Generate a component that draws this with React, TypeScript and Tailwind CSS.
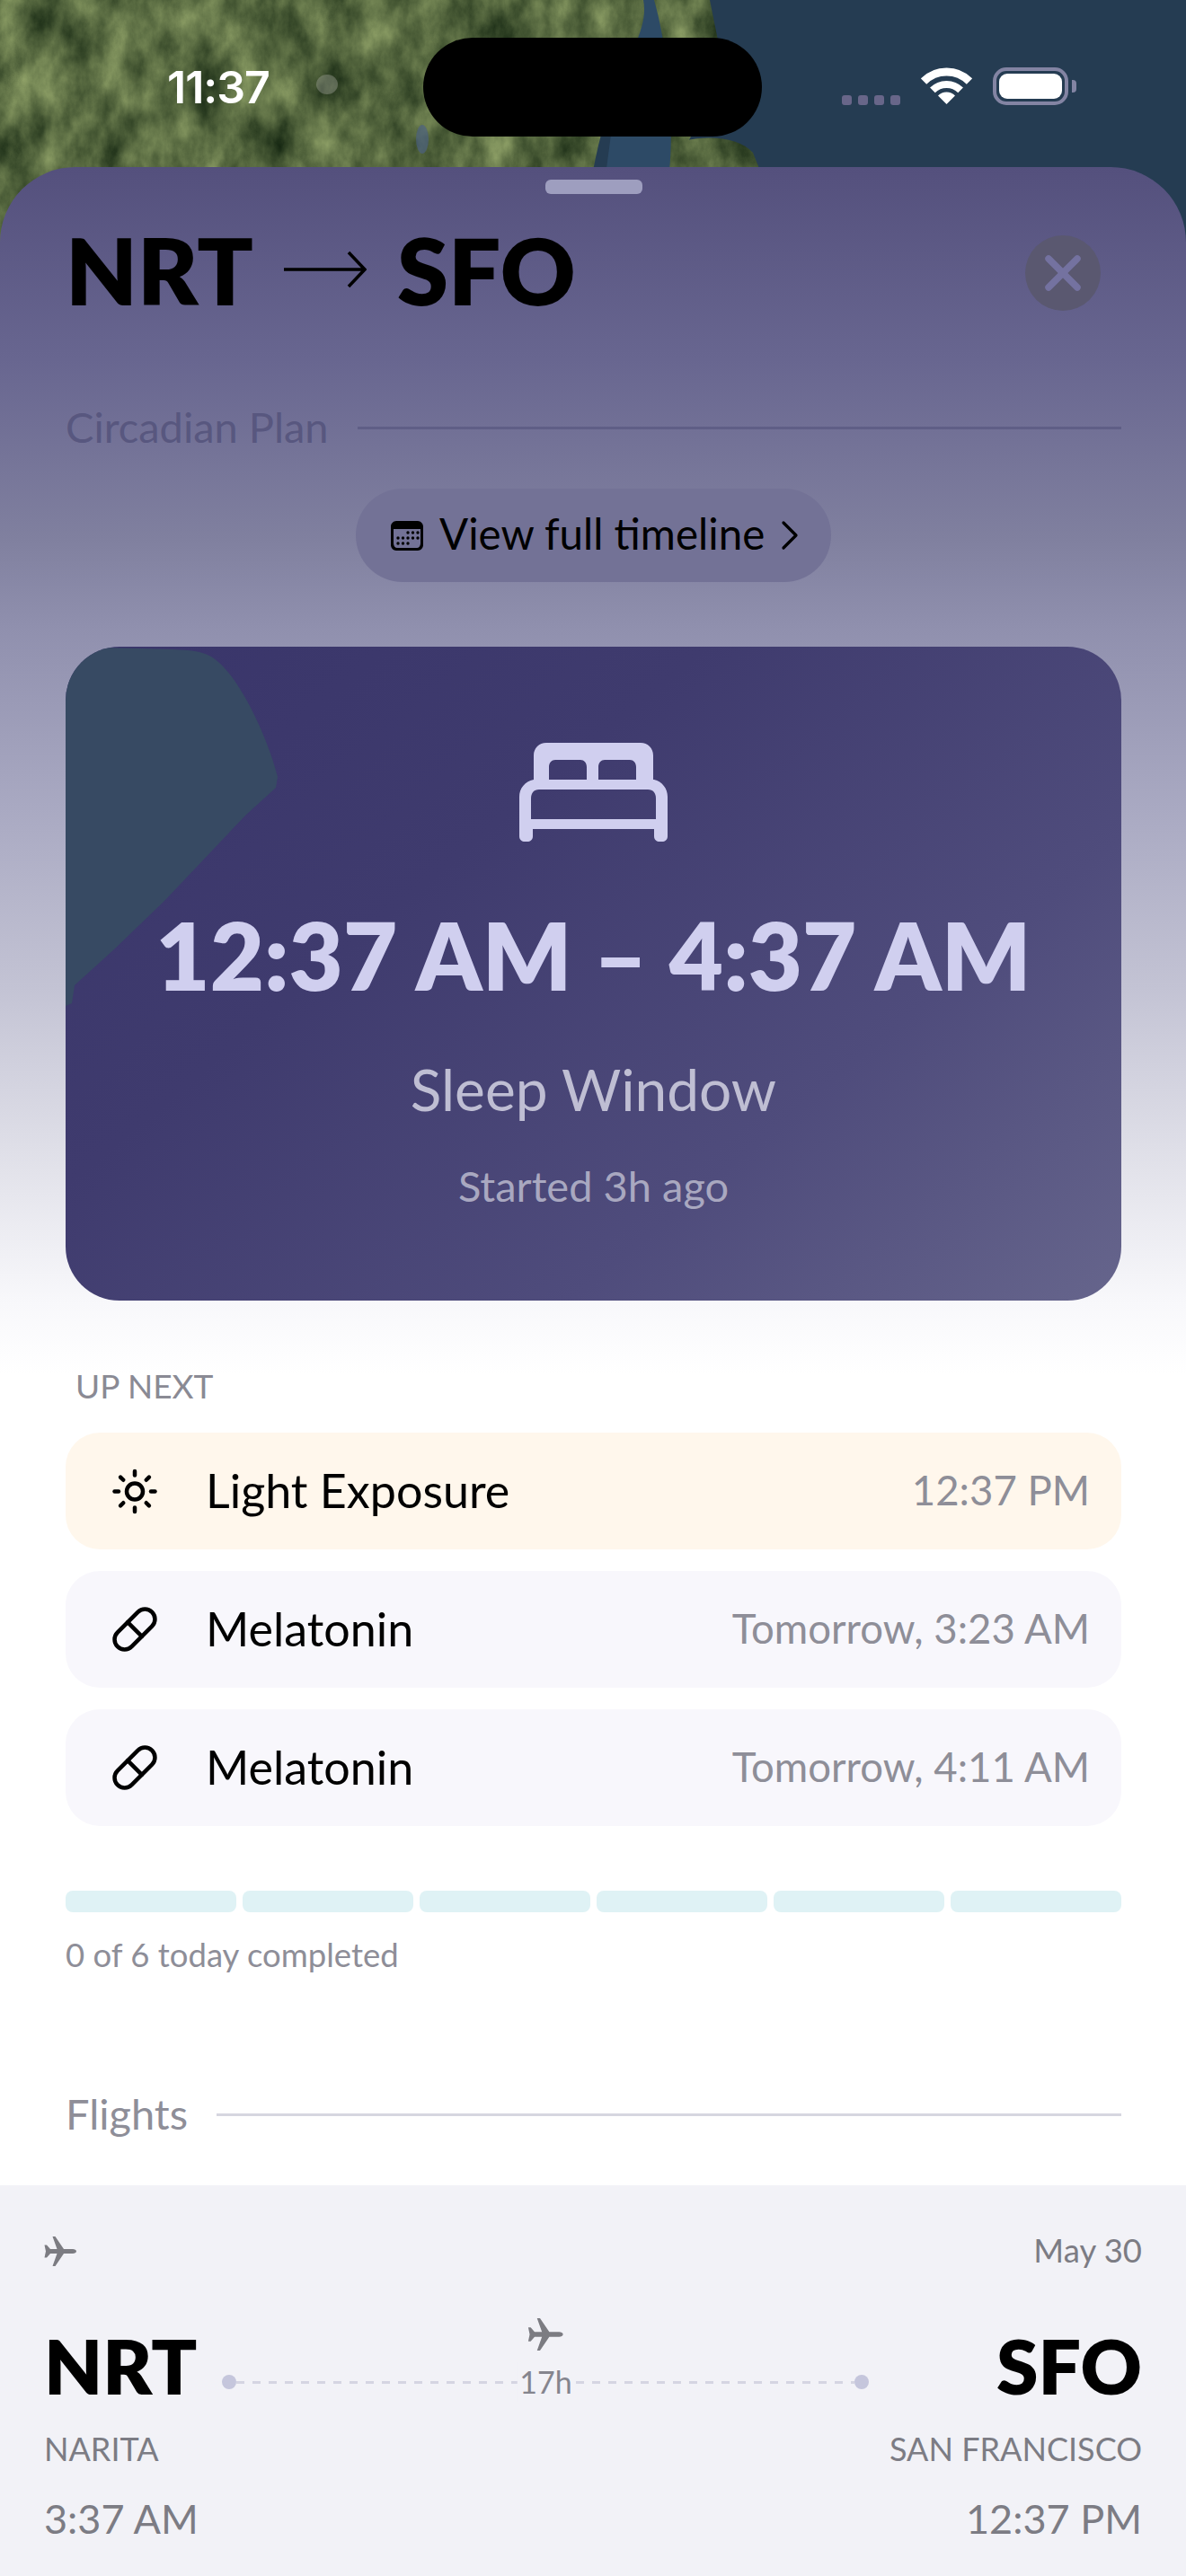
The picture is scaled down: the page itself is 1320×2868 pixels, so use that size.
import { ChevronRight, Pill, Sun, X } from "lucide-react"

function MapBackdrop() {
  return (
    <svg className="absolute left-0 top-0 h-[300px] w-[1320px]" viewBox="0 0 1320 300">
      <defs>
        <filter id="land" x="0" y="0" width="100%" height="100%" colorInterpolationFilters="sRGB">
          <feTurbulence type="fractalNoise" baseFrequency="0.028 0.016" numOctaves="6" seed="11" result="n" />
          <feColorMatrix in="n" type="matrix" values="0.6 0 0 0 0.04  0.6 0 0 0 0.11  0.42 0 0 0 0.04  0 0 0 0 1" result="c" />
          <feComposite in="c" in2="SourceAlpha" operator="in" />
        </filter>
      </defs>
      <rect width="1320" height="300" fill="#253c52" />
      <path d="M660 300 L680 150 L700 60 L716 0 L760 0 L760 190 L745 300 Z" fill="#2d4a66" />
      <path d="M0 0 H716 C722 30 700 60 690 90 C676 120 668 150 660 190 L650 300 H0 Z" fill="#000" filter="url(#land)" />
      <path d="M728 0 H790 C796 30 800 50 806 75 C800 100 790 120 770 150 C760 170 750 180 745 190 C750 140 745 60 728 0 Z" fill="#000" filter="url(#land)" />
      <path d="M748 160 C780 150 820 150 838 170 L850 200 H745 Z" fill="#000" filter="url(#land)" />
      <ellipse cx="364" cy="94" rx="12" ry="11" fill="#b5b5b0" opacity="0.35" />
      <ellipse cx="470" cy="155" rx="7" ry="16" fill="#4a5f8a" opacity="0.6" />
    </svg>
  )
}

function StatusBar() {
  return (
    <div className="relative flex h-[186px] items-start">
      <div className="ml-[186px] mt-[67px] w-[130px] text-[50px] leading-[60px] font-semibold tracking-[-1px] text-white font-['Inter',sans-serif]">11:37</div>
      <div className="ml-[155px] mt-[42px] h-[110px] w-[377px] rounded-full bg-black" />
      <div className="ml-[89px] mt-[75px] flex h-[42px] items-end">
        <div className="flex gap-[7px]">
          <div className="h-[11px] w-[11px] rounded-[3px] bg-[#686689]" />
          <div className="h-[11px] w-[11px] rounded-[3px] bg-[#686689]" />
          <div className="h-[11px] w-[11px] rounded-[3px] bg-[#686689]" />
          <div className="h-[11px] w-[11px] rounded-[3px] bg-[#686689]" />
        </div>
        <svg className="ml-[23px]" width="57" height="42" viewBox="0 0 57 42" fill="none">
          <path d="M3 15.5 A36 36 0 0 1 54 15.5" stroke="#fff" strokeWidth="9" />
          <path d="M12.9 25.4 A22 22 0 0 1 44.1 25.4" stroke="#fff" strokeWidth="8" />
          <path d="M28.5 41 L19 31.5 A13.4 13.4 0 0 1 38 31.5 Z" fill="#fff" />
        </svg>
        <div className="ml-[23px] flex h-[42px] w-[84px] items-center justify-center rounded-[15px] border-[4px] border-[#8384a3]">
          <div className="h-[28px] w-[70px] rounded-[9px] bg-white" />
        </div>
        <div className="mb-[14px] ml-[4px] h-[14px] w-[5px] rounded-r-[4px] bg-[#8384a3]" />
      </div>
    </div>
  )
}

function SectionTitle({ label, color, line }: { label: string; color: string; line: string }) {
  return (
    <div className="flex h-[60px] items-center gap-[32px]">
      <span className={`-mt-[3px] text-[47px] leading-[60px] ${color}`}>{label}</span>
      <div className={`h-[3px] flex-1 ${line}`} />
    </div>
  )
}

function NextRow({ icon, label, time, tint }: { icon: React.ReactNode; label: string; time: string; tint: string }) {
  return (
    <div className={`flex h-[130px] items-center rounded-[38px] pl-[50px] pr-[35px] ${tint}`}>
      <div className="flex w-[54px] justify-center">{icon}</div>
      <span className="-mt-[2px] ml-[52px] text-[52px] leading-[70px] text-black">{label}</span>
      <span className="-mt-[2px] ml-auto text-[45.5px] leading-[60px] text-[#8e8e98]">{time}</span>
    </div>
  )
}

function Plane({ width, height }: { width: number; height: number }) {
  return (
    <svg width={width} height={height} viewBox="0 0 36 33" fill="#7c7c82">
      <path d="M36 16.5 C36 18 34 19 32 19 L22 19 L12.5 33 L9.5 33 L14.5 19 L7 19 L3 23.5 L0.5 23.5 L2 16.5 L0.5 9.5 L3 9.5 L7 14 L14.5 14 L9.5 0 L12.5 0 L22 14 L32 14 C34 14 36 15 36 16.5 Z" />
    </svg>
  )
}

function FlightCard() {
  return (
    <div className="-ml-[73px] -mr-[72px] mt-[49px] h-[435px] bg-[#f2f2f7] pl-[49px] pr-[49px] pt-[57px]">
      <div className="flex h-[33px] items-center justify-between">
        <Plane width={36} height={33} />
        <span className="-mt-[4px] text-[36.5px] leading-[50px] text-[#7c7c84]">May 30</span>
      </div>
      <div className="mt-[47px] flex h-[120px] items-start justify-between">
        <div className="flex">
          <span className="text-[84px] leading-[128px] font-extrabold text-black">NRT</span>
          <div className="relative ml-[28px] flex w-[720px] flex-col items-center">
            <div className="mt-[11px]">
              <Plane width={40} height={36} />
            </div>
            <div className="mt-[27px] flex h-[16px] w-full items-center">
              <div className="h-[16px] w-[16px] rounded-full bg-[#c5c6dc]" />
              <div className="h-[3px] flex-1 bg-[repeating-linear-gradient(90deg,#d5d5e2_0_9px,transparent_9px_18px)]" />
              <div className="h-[16px] w-[16px] rounded-full bg-[#c5c6dc]" />
            </div>
            <span className="absolute left-1/2 top-[60px] -translate-x-1/2 bg-[#f2f2f7] px-[2px] text-[34px] leading-[44px] text-[#85858e]">17h</span>
          </div>
        </div>
        <span className="text-[84px] leading-[128px] font-extrabold text-black">SFO</span>
      </div>
      <div className="mt-[11px] flex h-[50px] items-center justify-between text-[36px] text-[#7c7c84]">
        <span>NARITA</span>
        <span>SAN FRANCISCO</span>
      </div>
      <div className="mt-[24px] flex h-[60px] items-center justify-between text-[45px] text-[#7c7c84]">
        <span>3:37 AM</span>
        <span>12:37 PM</span>
      </div>
    </div>
  )
}

export default function App() {
  return (
    <div className="relative h-[2868px] w-[1320px] overflow-hidden bg-[#253c52] font-['Lato',sans-serif]">
      <MapBackdrop />
      <StatusBar />

      <div className="relative rounded-t-[84px] bg-[linear-gradient(180deg,#54507d_0px,#686690_214px,#80809f_414px,#9090ae_514px,#a9a9c2_714px,#c3c3d4_914px,#e2e2ea_1114px,#f8f8fb_1264px,#ffffff_1344px)] pl-[73px] pr-[72px]">
        <div className="flex justify-center pt-[14px]">
          <div className="h-[16px] w-[108px] rounded-[6px] bg-[#9e9ebf]" />
        </div>

        {/* Header */}
        <div className="mt-[46px] flex h-[84px] items-center justify-between">
          <div className="-mt-[8px] flex items-center">
            <span className="text-[103px] leading-[100px] font-extrabold text-black">NRT</span>
            <svg className="ml-[34px] mr-[34px]" width="92" height="46" viewBox="0 0 92 46" fill="none" stroke="#000" strokeWidth="3.5">
              <path d="M0 23 H90 M72 4 L90 23 L72 42" />
            </svg>
            <span className="text-[103px] leading-[100px] font-extrabold text-black">SFO</span>
          </div>
          <div className="mr-[23px] flex h-[84px] w-[84px] items-center justify-center rounded-full bg-[#5a5870]">
            <X size={64} strokeWidth={2.8} className="text-[#7472a0]" />
          </div>
        </div>

        <div className="mt-[100px]">
          <SectionTitle label="Circadian Plan" color="text-[#58577f]" line="bg-[#5f5e86]" />
        </div>

        <div className="mt-[38px] flex justify-center">
          <div className="flex h-[104px] w-[529px] items-center rounded-full bg-[#737296] pl-[39px]">
            <svg width="36" height="33" viewBox="0 0 36 33" fill="#000">
              <path fillRule="evenodd" d="M6 0 H30 C33 0 36 3 36 6 V27 C36 30 33 33 30 33 H6 C3 33 0 30 0 27 V6 C0 3 3 0 6 0 Z M3 9 V25 C3 28 5 30 7 30 H29 C31 30 33 28 33 25 V9 Z" />
              <circle cx="19" cy="13" r="1.7" />
              <circle cx="24.5" cy="13" r="1.7" />
              <circle cx="30" cy="13" r="1.7" />
              <circle cx="8" cy="19" r="1.7" />
              <circle cx="13.5" cy="19" r="1.7" />
              <circle cx="19" cy="19" r="1.7" />
              <circle cx="24.5" cy="19" r="1.7" />
              <circle cx="30" cy="19" r="1.7" />
              <circle cx="8" cy="25" r="1.7" />
              <circle cx="13.5" cy="25" r="1.7" />
              <circle cx="19" cy="25" r="1.7" />
            </svg>
            <span className="-mt-[4px] ml-[18px] text-[47.5px] leading-[60px] text-black">View full timeline</span>
            <ChevronRight size={56} strokeWidth={1.4} className="text-black" />
          </div>
        </div>

        {/* Sleep window card */}
        <div className="relative mt-[72px] flex h-[728px] flex-col items-center overflow-hidden rounded-[60px] bg-[linear-gradient(140deg,#39356a_0%,#3f3b6e_35%,#4f4c7c_70%,#66658c_100%)]">
          <svg className="absolute left-0 top-0" width="240" height="400" viewBox="0 0 240 400">
            <path d="M0 400 L0 0 L120 3 C140 4 150 5 160 10 C190 25 225 100 236 145 L234 157 L200 188 L110 283 L54 337 L10 377 L7 397 Z" fill="#374a63" />
          </svg>
          <svg className="relative mt-[107px]" width="165" height="110" viewBox="0 0 165 110" fill="#d0cfef">
            <path fillRule="evenodd" d="M30 0 H135 C143 0 149 6 149 14 V41 H150 C159 43 165 51 165 60 V104 C165 108 162 110 159 110 H156 C153 110 150 108 150 104 V96 H15 V104 C15 108 12 110 9 110 H6 C3 110 0 108 0 104 V60 C0 51 6 43 16 41 V14 C16 6 22 0 30 0 Z M33 41 H75 V27 C75 22 72 19 68 19 H40 C36 19 33 22 33 27 Z M88 41 H130 V27 C130 22 127 19 123 19 H95 C91 19 88 22 88 27 Z M22 52 C16 52 13 56 13 62 V85 H152 V62 C152 56 149 52 143 52 Z" />
          </svg>
          <div className="relative mt-[66px] text-[104px] leading-[120px] font-extrabold text-[#d0cfef]">12:37 AM – 4:37 AM</div>
          <div className="mt-[50px] text-[64px] leading-[80px] text-[#bfbed3]">Sleep Window</div>
          <div className="mt-[37px] text-[47px] leading-[60px] text-[#a9a8c0]">Started 3h ago</div>
        </div>

        <div className="mt-[70px] h-[52px] pl-[11px] text-[37px] leading-[50px] text-[#8a8a94]">UP NEXT</div>

        <div className="mt-[25px] flex flex-col gap-[24px]">
          <NextRow icon={<Sun size={65} strokeWidth={2} className="text-black" />} label="Light Exposure" time="12:37 PM" tint="bg-[#fff7ec]" />
          <NextRow icon={<Pill size={60} strokeWidth={2} className="text-black" />} label="Melatonin" time="Tomorrow, 3:23 AM" tint="bg-[#f8f7fc]" />
          <NextRow icon={<Pill size={60} strokeWidth={2} className="text-black" />} label="Melatonin" time="Tomorrow, 4:11 AM" tint="bg-[#f8f7fc]" />
        </div>

        <div className="mt-[72px] grid h-[24px] grid-cols-6 gap-[7px]">
          <div className="rounded-[8px] bg-[#dff2f5]" />
          <div className="rounded-[8px] bg-[#dff2f5]" />
          <div className="rounded-[8px] bg-[#dff2f5]" />
          <div className="rounded-[8px] bg-[#dff2f5]" />
          <div className="rounded-[8px] bg-[#dff2f5]" />
          <div className="rounded-[8px] bg-[#dff2f5]" />
        </div>
        <div className="mt-[22px] h-[50px] text-[36.5px] leading-[50px] text-[#8e8e98]">0 of 6 today completed</div>

        <div className="mt-[123px]">
          <SectionTitle label="Flights" color="text-[#8e8e98]" line="bg-[#d6d6e0]" />
        </div>

        <FlightCard />
      </div>
    </div>
  )
}
